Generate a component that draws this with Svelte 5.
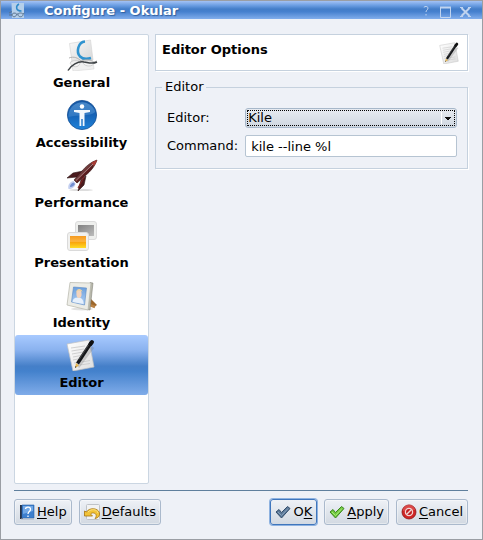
<script>
  const pages = ['General', 'Accessibility', 'Performance', 'Presentation', 'Identity', 'Editor'];
  let current = $state('Editor');
  let editor = $state('Kile');
  let command = $state('kile --line %l');
</script>

{#snippet note(size)}
  <svg width={size} height={size} viewBox="0 0 32 32" aria-hidden="true">
    <defs>
      <linearGradient id="paper" x1="0" y1="0" x2="1" y2="1">
        <stop offset="0" stop-color="#fff" /><stop offset="1" stop-color="#dedede" />
      </linearGradient>
    </defs>
    <path d="M1 5L23 1L28 28L7 32Z" fill="url(#paper)" stroke="#c2c2c2" stroke-width=".7" />
    <path d="M5 9L19 7M5.500 12L18 10M6 15L17 13M7 18L15 16.500M7 21L12 20M8 24L11 23.500M16 23L24 21.500M14 26L24 24.500" stroke="#cbcbcb" stroke-width=".9" />
    <path d="M12 28L27 8" stroke="#777" stroke-opacity=".3" stroke-width="3" />
    <path d="M9 29L10 24L13 26.500Z" fill="#e7b54c" />
    <path d="M9 29L9.500 27L10.500 28Z" fill="#222" />
    <path d="M11.500 24.500L25 4" stroke="#15171a" stroke-width="3.400" />
    <path d="M24.500 5L26 3" stroke="#111" stroke-width="4" stroke-linecap="round" />
    <path d="M13 20.500L22.500 6" stroke="#666" stroke-width=".6" />
  </svg>
{/snippet}

{#snippet pageIcon(name)}
  {#if name === 'General'}
    <svg width="32" height="32" viewBox="0 0 32 32" aria-hidden="true">
      <defs>
        <linearGradient id="sheet" x1="0" y1="0" x2="1" y2="1">
          <stop offset="0" stop-color="#fafafa" /><stop offset="1" stop-color="#d6d6d6" />
        </linearGradient>
      </defs>
      <path d="M5 22L27 22L28 30L7 32Z" fill="#f0f0f0" stroke="#d8d8d8" stroke-width=".6" />
      <path d="M3.500 4.500L24.500 1L27 21L6 23Z" fill="url(#sheet)" stroke="#d2d2d2" stroke-width=".6" />
      <path d="M19 2.500C12 3 10 13 14 17.500C17 20.500 20 20.500 25 19" fill="none" stroke="#2f93cf" stroke-width="2.600" />
      <path d="M3 19C8 17 12 19 15 22M15 22C19 20 25 20 29 24M28 23L31 22" fill="none" stroke="#aaa" stroke-width=".9" />
      <path d="M4 24C7 20 14 21 14 24C13 29 6 29 4 24M17 24C19 21 26 21 28 24C27 28 19 28 17 24" fill="#f6f6f6" fill-opacity=".6" stroke="#c4c4c4" stroke-width=".7" />
      <path d="M2 31.500C5 26 12 22 18 23C22 23.500 26 25.500 31 23" fill="none" stroke="#3d4144" stroke-width="1.500" />
    </svg>
  {:else if name === 'Accessibility'}
    <svg width="32" height="32" viewBox="0 0 32 32" aria-hidden="true">
      <defs>
        <linearGradient id="disc" x1="0" y1="0" x2="0" y2="1">
          <stop offset="0" stop-color="#1658a4" /><stop offset=".5" stop-color="#1763b6" /><stop offset="1" stop-color="#1f83da" />
        </linearGradient>
        <linearGradient id="gloss" x1="0" y1="0" x2="0" y2="1">
          <stop offset="0" stop-color="#5f9cd6" /><stop offset="1" stop-color="#3a80c8" />
        </linearGradient>
      </defs>
      <circle cx="16" cy="16" r="14.600" fill="url(#disc)" stroke="#164f93" stroke-width=".8" />
      <path d="M2.500 17A13.700 13.700 0 0 1 29.300 13C24 18 12 15 2.500 18Z" fill="url(#gloss)" opacity=".7" />
      <circle cx="16" cy="7.500" r="2.200" fill="#fff" />
      <path d="M8 11H24V13L18.500 14V27H16.700V20H15.300V27H13.500V14L8 13Z" fill="#f3f8fd" />
    </svg>
  {:else if name === 'Performance'}
    <svg width="32" height="32" viewBox="0 0 32 32" aria-hidden="true">
      <defs>
        <linearGradient id="hull" x1="0" y1="0" x2="1" y2="1">
          <stop offset=".3" stop-color="#8d6262" /><stop offset=".55" stop-color="#5a1c1d" /><stop offset="1" stop-color="#250d0d" />
        </linearGradient>
      </defs>
      <ellipse cx="15" cy="31" rx="12" ry="1.200" fill="#ddd" />
      <path d="M7.500 22C3 23 1.500 27 2.500 30C6 30 9.500 28 9.500 24Z" fill="#c3cff0" />
      <path d="M7.500 23.500C5 24.500 4 26 4 28C7 28 8 26 9 25Z" fill="#728ed1" />
      <path d="M17 12L7 14L1 19L11 18ZM20 17L18 26L12 32L15 21Z" fill="#4b1b1d" stroke="#2d1515" stroke-width=".6" />
      <path d="M31 1C25 3 20 7 16 12L8 21L11 24L19 17C25 12 29 7 31 1Z" fill="url(#hull)" stroke="#301011" stroke-width=".6" />
      <path d="M31 1C28.500 2 26.500 2.800 25 4L28 7C30 4.500 30.600 3 31 1Z" fill="#a83b34" />
      <path d="M27 5L10 21.500" stroke="#b18c8c" stroke-width=".9" />
      <path d="M18 18L12 29" stroke="#7d2424" stroke-width="1.200" />
    </svg>
  {:else if name === 'Presentation'}
    <svg width="32" height="32" viewBox="0 0 32 32" aria-hidden="true">
      <defs>
        <linearGradient id="amber" x1="0" y1="0" x2="0" y2="1">
          <stop offset="0" stop-color="#f59a20" /><stop offset=".45" stop-color="#fdb540" /><stop offset=".5" stop-color="#f9a20a" /><stop offset="1" stop-color="#ffdc24" />
        </linearGradient>
        <linearGradient id="steel" x1="0" y1="0" x2="1" y2="1">
          <stop offset="0" stop-color="#808080" /><stop offset="1" stop-color="#bcbcbc" />
        </linearGradient>
      </defs>
      <rect x="9.500" y="2.500" width="21" height="18" rx="2.500" fill="#eeefed" stroke="#dcdcdc" />
      <rect x="12" y="6" width="16" height="11" fill="url(#steel)" />
      <rect x="1.500" y="13.500" width="21" height="18" rx="2.500" fill="#f1f1ef" stroke="#dadada" />
      <rect x="4" y="17" width="16" height="12" fill="url(#amber)" />
    </svg>
  {:else if name === 'Identity'}
    <svg width="32" height="32" viewBox="0 0 32 32" aria-hidden="true">
      <defs>
        <linearGradient id="sky" x1="0" y1="0" x2="0" y2="1">
          <stop offset="0" stop-color="#6a9edc" /><stop offset="1" stop-color="#b2d1f5" />
        </linearGradient>
      </defs>
      <ellipse cx="16" cy="30" rx="11" ry="1.500" fill="#e2e2e2" />
      <path d="M24 19L31 26L28 28L22 24Z" fill="#9d672b" />
      <path d="M21 25L29 28" stroke="#b98143" stroke-width="2.500" />
      <path d="M24 3.500L27 4L24 31L21 30.500Z" fill="#b8b8ab" stroke="#77776e" stroke-width=".5" />
      <path d="M4 3.500L25 4L22 31L1 26Z" fill="#ecece6" stroke="#b4b4a9" stroke-width=".7" />
      <path d="M7.500 8L20.500 9L18.500 26L5.500 23Z" fill="url(#sky)" stroke="#5b88c2" stroke-width=".6" />
      <path d="M6.500 23C7 19 10 18.500 12 18.500C16 18.500 17.500 21 17.500 25Z" fill="#e6f0fc" />
      <ellipse cx="13" cy="15" rx="2.600" ry="4" fill="#f2d3bd" />
      <path d="M10.300 14C9.500 9.500 15.500 8.500 16.500 13L15 12L12 11.500Z" fill="#edd3a0" />
    </svg>
  {:else}
    {@render note(32)}
  {/if}
{/snippet}

<div class="window">
  <header class="titlebar">
    <svg width="16" height="16" viewBox="0 0 16 16" aria-hidden="true">
      <path d="M2.500 0H15V15H3Z" fill="#b5cfea" />
      <path d="M10 1C6.500 3 6.500 8 12.500 8" fill="none" stroke="#2f8ac9" stroke-width="1.500" />
      <path d="M0 10L3 8.500M0 12H3C3 9.500 7.500 9.500 7.500 11.500C7 14.500 3 14.500 3 11.500M9 11.500C9 9.500 14 9.500 14 11.500C14 14.500 9 14.500 9 11.500M7.500 11H9M14 11L15.500 10" fill="none" stroke="#59738f" />
    </svg>
    <h1>Configure - Okular</h1>
    <button aria-label="What's this"><svg width="16" height="16" viewBox="0 0 16 16"><path d="M6 4.500C6 3 10 3 10 5C10 7 8 7 8 9M8 11V12.500" /></svg></button>
    <button aria-label="Maximize"><svg width="16" height="16" viewBox="0 0 16 16"><path d="M2.500 4.500H12.500V14.500H2.500Z" /><path d="M2 4.500H13" stroke-width="2" /></svg></button>
    <button aria-label="Close"><svg width="16" height="16" viewBox="0 0 16 16"><path d="M3.500 5L11.500 13M11.500 5L3.500 13" stroke-width="2" /><path d="M2 4.500H5M10 4.500H13M2 13.500H5M10 13.500H13" /></svg></button>
  </header>

  <div class="content">
    <nav>
      {#each pages as name}
        <button class:selected={current === name} onclick={() => (current = name)}>
          {@render pageIcon(name)}
          <span>{name}</span>
        </button>
      {/each}
    </nav>

    <main>
      <div class="heading">
        <h2>Editor Options</h2>
        {@render note(22)}
      </div>
      <fieldset>
        <legend>Editor</legend>
        <label for="editor">Editor:</label>
        <div class="combo">
          <select id="editor" bind:value={editor}>
            <option>Kile</option>
            <option>Kate</option>
          </select>
          <svg width="20" height="16" viewBox="0 0 20 16" aria-hidden="true">
            <path d="M4.500 2V14" stroke="#fff" />
            <path d="M8 7H14V8H13V9H12V10H10V9H9V8H8Z" fill="#111" />
          </svg>
        </div>
        <label for="command">Command:</label>
        <input id="command" type="text" bind:value={command} />
      </fieldset>
    </main>
  </div>

  <footer>
    <button>
      <svg width="16" height="16" viewBox="0 0 16 16" aria-hidden="true">
        <path d="M1 1H4V15H1Z" fill="#253044" /><path d="M3 1H15V14H3Z" fill="#3d7fce" stroke="#2862a8" stroke-width=".6" />
        <path d="M4 2H14V7L4 10Z" fill="#72a8e6" /><path d="M2 15H15" stroke="#aab5c4" />
        <path d="M6.500 5C6.500 2.500 11.500 2.500 11.500 5.200C11.500 7.500 9 7.500 9 10M9 11.500V13" fill="none" stroke="#fff" stroke-width="1.300" />
      </svg>
      <span><u>H</u>elp</span>
    </button>
    <button>
      <svg width="16" height="16" viewBox="0 0 16 16" aria-hidden="true">
        <rect x="2.500" y=".5" width="13" height="15" rx="1" fill="#f1f2f3" stroke="#bfc3c8" />
        <path d="M.5 7L2.500 8C5 3.500 14 3.500 15.500 9C16 12 14 14 11 14.500C13 12 12.500 9.500 9.500 9C8 8.800 7 9.300 6.500 10L8.500 12H.5Z" fill="#f2c337" stroke="#a67410" stroke-width=".8" />
        <path d="M4 8C7 4.500 13 5 14 9" fill="none" stroke="#fbe387" />
      </svg>
      <span><u>D</u>efaults</span>
    </button>
    <i class="spacer"></i>
    <button class="default">
      <svg width="16" height="16" viewBox="0 0 16 16" aria-hidden="true">
        <path d="M1 8L4 5.500L6.500 8.500L12.500 2.500L15 4.500L6.500 14Z" fill="#5a7796" stroke="#334e6c" stroke-linejoin="round" />
        <path d="M3 8L6.500 11.500L13 4.500" fill="none" stroke="#88a2bd" />
      </svg>
      <span>O<u>K</u></span>
    </button>
    <button>
      <svg width="16" height="16" viewBox="0 0 16 16" aria-hidden="true">
        <path d="M1 8L4 5.500L6.500 8.500L12.500 2.500L15 4.500L6.500 14Z" fill="#6fc93c" stroke="#3a8420" stroke-linejoin="round" />
        <path d="M3 8L6.500 11.500L13 4.500" fill="none" stroke="#a8e77c" />
      </svg>
      <span><u>A</u>pply</span>
    </button>
    <button>
      <svg width="16" height="16" viewBox="0 0 16 16" aria-hidden="true">
        <circle cx="8" cy="8" r="7" fill="#cf2525" stroke="#8c1515" stroke-width=".8" />
        <path d="M2 7A6 6 0 0 1 14 6Z" fill="#e46161" opacity=".6" />
        <circle cx="8" cy="8" r="3.600" fill="#c21d1d" stroke="#f0d5d5" stroke-width="1.300" />
        <path d="M5.500 10.500L10.500 5.500" stroke="#f0d5d5" stroke-width="1.500" />
      </svg>
      <span><u>C</u>ancel</span>
    </button>
  </footer>
</div>

<style>
  :global(body) { margin: 0; }
  .window, .window * { box-sizing: border-box; }
  .window {
    min-height: 100vh;
    display: flex;
    flex-direction: column;
    border: 1px solid #9a9ea4;
    background: #eef1f7;
    color: #000;
    font: 13px/16px "DejaVu Sans", sans-serif;
  }
  button, input, select { font: inherit; color: inherit; margin: 0; }
  h1, h2 { margin: 0; font-size: 13px; line-height: 16px; }
  svg { display: block; flex: none; }

  .titlebar {
    display: flex;
    align-items: flex-end;
    gap: 4px;
    height: 18px;
    padding: 0 8px;
    background: linear-gradient(#a3c2f5, #6a9de2 25%, #437dc8 45%, #4781cf 60%, #82aeec);
  }
  .titlebar h1 { flex: 1; padding-left: 15px; color: #fff; text-shadow: 1px 1px 1px #315f9d; }
  .titlebar button { padding: 0; border: 0; background: none; }
  .titlebar button path { fill: none; stroke: #bfd3ef; }

  .content { flex: 1; display: flex; gap: 6px; padding: 15px 14px 6px 13px; }
  nav {
    flex: none;
    width: 135px;
    border: 1px solid #cbd6e2;
    border-radius: 2px;
    background: #fff;
  }
  nav button {
    display: flex;
    flex-direction: column;
    align-items: center;
    gap: 4px;
    width: 100%;
    height: 60px;
    padding: 4px 0;
    border: 0;
    border-radius: 3px;
    background: none;
    font-weight: bold;
  }
  nav .selected { background: linear-gradient(#a8caff, #8ab2ef 25%, #457fc8 52%, #4381cc 60%, #80ace9); }

  main { flex: 1; min-width: 0; }
  .heading {
    display: flex;
    justify-content: space-between;
    height: 37px;
    padding: 7px 6px;
    border: 1px solid #c5d1de;
    background: #fff;
    box-shadow: 1px 1px #fff;
  }
  fieldset {
    display: grid;
    grid-template-columns: auto 1fr;
    align-items: center;
    gap: 7px;
    margin: 8px 0 0;
    padding: 13px 10px 11px 11px;
    border: 1px solid #c5d1de;
    box-shadow: 1px 1px #fff;
    min-width: 0;
  }
  legend { margin-left: -5px; padding: 0 3px; }
  .combo { display: grid; align-items: center; min-width: 0; }
  .combo > * { grid-area: 1 / 1; }
  .combo svg { justify-self: end; pointer-events: none; }
  select {
    appearance: none;
    width: 100%;
    height: 20px;
    padding: 0 2px;
    border: 1px solid #a7b8ca;
    border-radius: 3px;
    background: linear-gradient(#e7ebf1, #cfd7e0);
    outline: 1px dotted #000;
    outline-offset: -3px;
  }
  #command {
    width: 100%;
    height: 22px;
    padding: 0 5px;
    border: 1px solid #b6c4d2;
    border-radius: 2px;
    background: #fff;
  }

  footer {
    display: flex;
    gap: 7px;
    margin: 0 14px 0 13px;
    padding: 8px 0 14px;
    border-top: 1px solid #5f7f9d;
  }
  footer button {
    display: flex;
    align-items: center;
    gap: 2px;
    height: 26px;
    padding: 0 4px;
    border: 1px solid #aab9cc;
    border-radius: 3px;
    background: linear-gradient(#eef1f6, #d2d9e2);
    box-shadow: inset 0 0 0 1px #ffffff66;
  }
  footer .default { border-color: #3f76bd; box-shadow: 0 0 0 1px #8eb2e0; }
  footer u { text-underline-offset: 2px; }
  .spacer { flex: 1; }
</style>
